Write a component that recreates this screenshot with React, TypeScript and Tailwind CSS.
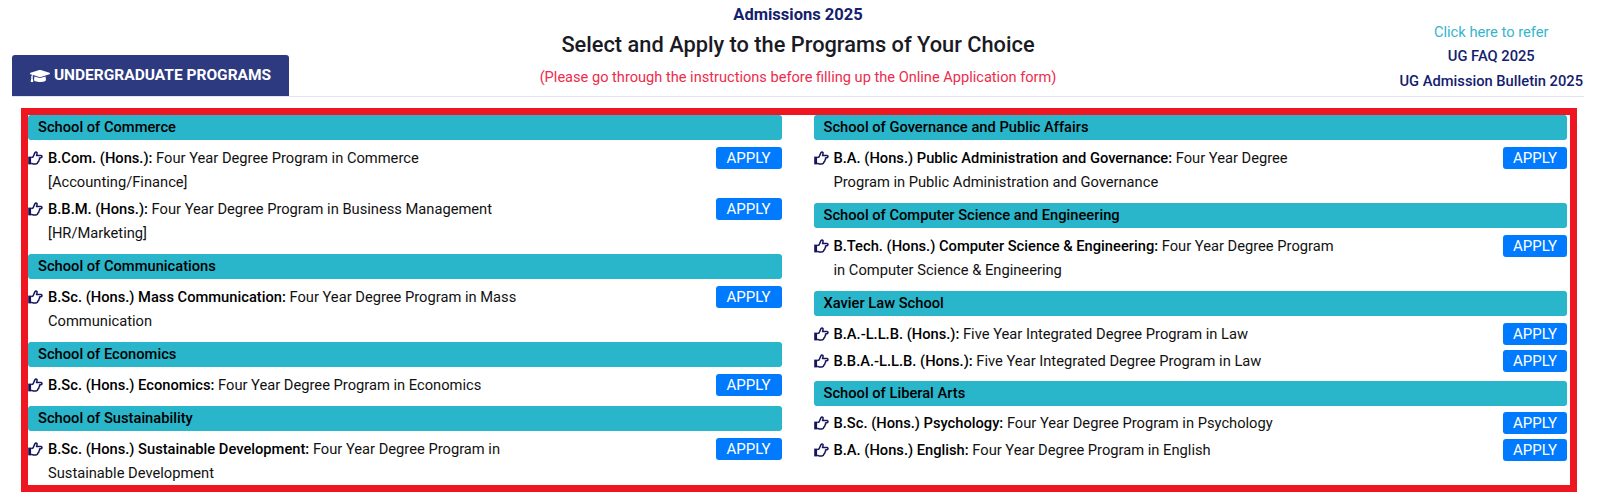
import React from "react";
import { FaGraduationCap } from "react-icons/fa";

type Program = { label: string; rest: string; line2?: string };
type School = { name: string; programs: Program[]; body?: string };

const left: School[] = [
  {
    name: "School of Commerce",
    programs: [
      { label: "B.Com. (Hons.):", rest: " Four Year Degree Program in Commerce", line2: "[Accounting/Finance]" },
      { label: "B.B.M. (Hons.):", rest: " Four Year Degree Program in Business Management", line2: "[HR/Marketing]" },
    ],
  },
  {
    name: "School of Communications",
    programs: [{ label: "B.Sc. (Hons.) Mass Communication:", rest: " Four Year Degree Program in Mass", line2: "Communication" }],
  },
  {
    name: "School of Economics",
    programs: [{ label: "B.Sc. (Hons.) Economics:", rest: " Four Year Degree Program in Economics" }],
  },
  {
    name: "School of Sustainability",
    programs: [{ label: "B.Sc. (Hons.) Sustainable Development:", rest: " Four Year Degree Program in", line2: "Sustainable Development" }],
  },
];

const right: School[] = [
  {
    name: "School of Governance and Public Affairs",
    programs: [{ label: "B.A. (Hons.) Public Administration and Governance:", rest: " Four Year Degree", line2: "Program in Public Administration and Governance" }],
  },
  {
    name: "School of Computer Science and Engineering",
    programs: [{ label: "B.Tech. (Hons.) Computer Science & Engineering:", rest: " Four Year Degree Program", line2: "in Computer Science & Engineering" }],
  },
  {
    name: "Xavier Law School",
    body: "flex flex-col gap-[3px] pt-[6px] pb-[8px]",
    programs: [
      { label: "B.A.-L.L.B. (Hons.):", rest: " Five Year Integrated Degree Program in Law" },
      { label: "B.B.A.-L.L.B. (Hons.):", rest: " Five Year Integrated Degree Program in Law" },
    ],
  },
  {
    name: "School of Liberal Arts",
    body: "flex flex-col gap-[3px] pt-[5px] pb-[9px]",
    programs: [
      { label: "B.Sc. (Hons.) Psychology:", rest: " Four Year Degree Program in Psychology" },
      { label: "B.A. (Hons.) English:", rest: " Four Year Degree Program in English" },
    ],
  },
];

function HandIcon() {
  return (
    <svg viewBox="0 0 15 14" className="w-[15px] h-[14px] mt-[5px] mr-[5px] shrink-0">
      <rect x="0.2" y="5.6" width="3.2" height="7.8" fill="#14145f" />
      <path
        d="M3.2 6.6 L5 6 L7 1.6 Q8 0.4 9 1.5 Q9.3 3 8.5 4.6 L13 4.6 Q14.6 5 13.6 6.5 L11.5 6.9 Q12 8.2 11 9 Q11.1 10.4 10 11 Q9.6 12.9 8 12.9 L5 12.9 L3.2 12.2"
        fill="#ffffff"
        stroke="#14145f"
        strokeWidth="1.5"
        strokeLinejoin="round"
      />
    </svg>
  );
}

function Row({ p, wide }: { p: Program; wide: boolean }) {
  return (
    <div className="flex items-start justify-between">
      <div className="flex text-[14.7px] leading-[24px] text-[#111]">
        <HandIcon />
        <div>
          <div className="whitespace-pre">
            <span className="font-medium text-black">{p.label}</span>
            {p.rest}
          </div>
          {p.line2 && <div>{p.line2}</div>}
        </div>
      </div>
      <button
        className={
          wide
            ? "w-[66px] h-[22px] mt-[1px] rounded-[3px] bg-[#007bff] text-white text-[15px] leading-[22px] text-center"
            : "w-[64px] h-[22px] mt-[1px] rounded-[3px] bg-[#007bff] text-white text-[15px] leading-[22px] text-center"
        }
      >
        APPLY
      </button>
    </div>
  );
}

function Column({ schools, wide }: { schools: School[]; wide: boolean }) {
  return (
    <div className="flex-1 flex flex-col">
      {schools.map((s) => (
        <div key={s.name}>
          <div className="h-[25px] rounded-[3px] bg-[#29b5ca] pl-[10px] text-[14.7px] leading-[25px] font-medium text-black">
            {s.name}
          </div>
          <div className={s.body ?? "flex flex-col gap-[3px] pt-[6px] pb-[9px]"}>
            {s.programs.map((p) => (
              <Row key={p.label} p={p} wide={wide} />
            ))}
          </div>
        </div>
      ))}
    </div>
  );
}

export default function App() {
  return (
    <div className="w-[1600px] h-[499px] bg-white overflow-hidden font-['Roboto',sans-serif]">
      <div className="relative ml-[12px] mr-[16px] h-[97px] border-b border-[#e4e4ee]">
        <div className="flex flex-col items-center pt-[5px]">
          <div className="text-[16.5px] leading-[20px] font-bold text-[#14206e]">Admissions 2025</div>
          <div className="mt-[4px] text-[21.8px] leading-[32px] font-medium text-[#1a1a24]">
            Select and Apply to the Programs of Your Choice
          </div>
          <div className="mt-[5px] text-[14.6px] leading-[22px] text-[#ee2c4c]">
            (Please go through the instructions before filling up the Online Application form)
          </div>
        </div>
        <div className="absolute left-0 bottom-0 flex h-[41px] w-[277px] items-center justify-center gap-[4px] rounded-t-[3px] bg-[#2d3a80] text-[15.5px] font-bold text-white">
          <FaGraduationCap className="w-[20px] h-[20px]" />
          <span>UNDERGRADUATE PROGRAMS</span>
        </div>
        <div className="absolute right-[1px] top-[20px] flex flex-col items-center text-[14.7px]">
          <div className="leading-[25px] text-[#35b5cb]">Click here to refer</div>
          <div className="leading-[23px] font-medium text-[#14206e]">UG FAQ 2025</div>
          <div className="leading-[27px] font-medium text-[#14206e]">UG Admission Bulletin 2025</div>
        </div>
      </div>
      <div className="mt-[11px] ml-[21px] w-[1556px] h-[384px] border-[7px] border-[#ee1620] flex gap-[32px] pr-[3px]">
        <Column schools={left} wide={true} />
        <Column schools={right} wide={false} />
      </div>
    </div>
  );
}
